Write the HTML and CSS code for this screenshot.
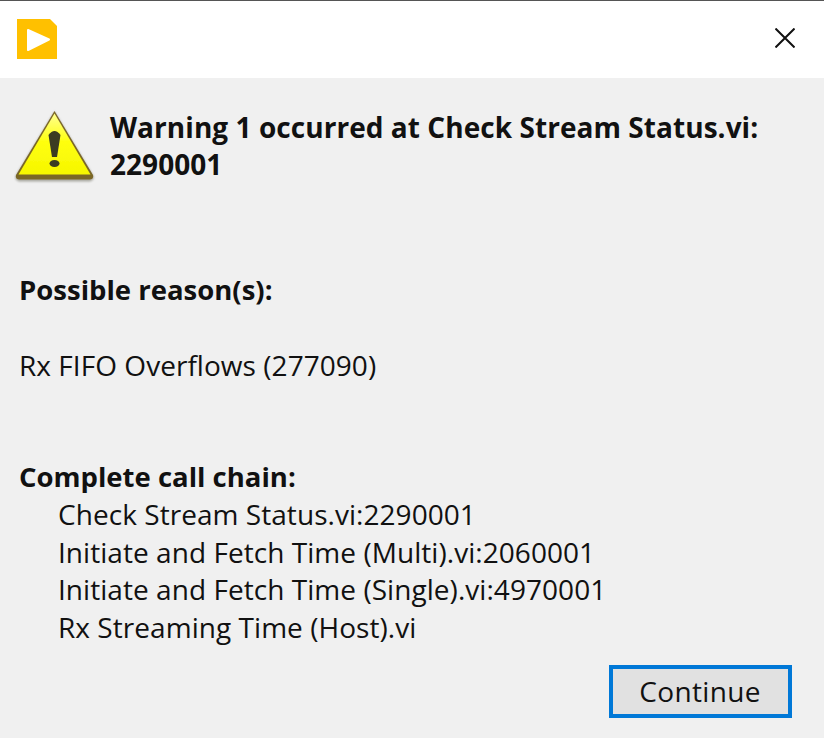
FILE: index.html
```html
<!DOCTYPE html>
<html lang="en">
<head>
<meta charset="utf-8">
<title>Warning</title>
<link rel="stylesheet" href="styles.css">
</head>
<body>
<div class="dialog">
  <header class="titlebar">
    <svg class="app-icon" width="40" height="40" viewBox="0 0 40 40"><path d="M0 0H33L40 7V40H0Z" fill="#ffc000"/><path d="M11 11L32 20.500L11 31Z" fill="#fff" stroke="#fff" stroke-width="2" stroke-linejoin="round"/></svg>
    <svg class="close" width="20" height="20" viewBox="0 0 20 20"><path d="M0.500 0.500L19.500 19.500M19.500 0.500L0.500 19.500" stroke="#111" stroke-width="2" fill="none"/></svg>
  </header>
  <main class="body">
    <div class="head">
      <svg class="warn" width="82" height="76" viewBox="0 0 82 76">
        <defs>
          <linearGradient id="wg" x1="0" y1="0" x2="0" y2="1"><stop offset="0" stop-color="#ffff90"/><stop offset="0.45" stop-color="#ffff10"/><stop offset="1" stop-color="#f6f600"/></linearGradient>
          <filter id="soft" x="-10%" y="-10%" width="120%" height="120%"><feGaussianBlur stdDeviation="0.7"/></filter>
          <filter id="softer" x="-10%" y="-10%" width="120%" height="120%"><feGaussianBlur stdDeviation="1.300"/></filter>
        </defs>
        <path d="M40.500 3.500L79.500 68Q80.500 72 76 73.500H5Q0.500 72 1.500 68Z" fill="#a8a8a0" filter="url(#softer)"/>
        <path d="M40.500 3L79 67Q80 71 76 71.500H5Q1 71 2 67Z" fill="#7a6628" filter="url(#soft)"/>
        <path d="M40.500 5.500L76.500 66.500H4.500Z" fill="url(#wg)" filter="url(#soft)"/>
        <path d="M34.500 27Q40.500 19 46.500 27L43 49H38Z" fill="#3a3a20" filter="url(#soft)"/>
        <ellipse cx="40.500" cy="55.500" rx="5" ry="3.500" fill="#3a3a20" filter="url(#soft)"/>
      </svg>
      <h1 class="title">Warning 1 occurred at Check Stream Status.vi: 2290001</h1>
    </div>
    <h2 class="label reasons">Possible reason(s):</h2>
    <p class="reason">Rx FIFO Overflows (277090)</p>
    <h2 class="label chain-label">Complete call chain:</h2>
    <ul class="chain">
      <li>Check Stream Status.vi:2290001</li>
      <li>Initiate and Fetch Time (Multi).vi:2060001</li>
      <li>Initiate and Fetch Time (Single).vi:4970001</li>
      <li>Rx Streaming Time (Host).vi</li>
    </ul>
    <div class="actions"><button class="continue" type="button">Continue</button></div>
  </main>
</div>
</body>
</html>
```
FILE: styles.css
```css
* { box-sizing: border-box; }
html, body { margin: 0; padding: 0; }
body { width: 824px; height: 738px; overflow: hidden; background: #f0f0f0; font-family: "Open Sans", "Noto Sans", sans-serif; color: #111; }
.dialog { display: flex; flex-direction: column; height: 738px; }
.titlebar { height: 78px; flex: none; background: #fff; border-top: 1px solid #555; display: flex; align-items: flex-start; justify-content: space-between; padding: 18px 29px 0 17px; }
.close { margin-top: 9px; }
.body { flex: 1; padding: 0 32px 0 19px; display: flex; flex-direction: column; }
.head { display: flex; align-items: flex-start; margin-left: -5px; padding-top: 30px; }
.warn { flex: none; margin-right: 14px; }
.title { margin: 0; padding-top: 1px; font-size: 28px; line-height: 37px; font-weight: 700; letter-spacing: 0.05px; max-width: 680px; }
.label { margin: 0; font-size: 27.5px; line-height: 38px; font-weight: 700; }
.reasons { margin-top: 87px; }
.reason { margin: 37px 0 0; font-size: 28px; line-height: 38px; letter-spacing: 0.04px; }
.chain-label { margin-top: 74px; }
.chain { list-style: none; margin: 0; padding: 0 0 0 39px; font-size: 28px; line-height: 37.6px; letter-spacing: 0.05px; }
.actions { display: flex; justify-content: flex-end; margin-top: 19px; }
.continue { width: 183px; height: 53px; border: 4px solid #0078d7; background: #e1e1e1; font: inherit; font-size: 28px; color: #111; padding: 0 1px 2px 0; letter-spacing: 0.35px; }
```
